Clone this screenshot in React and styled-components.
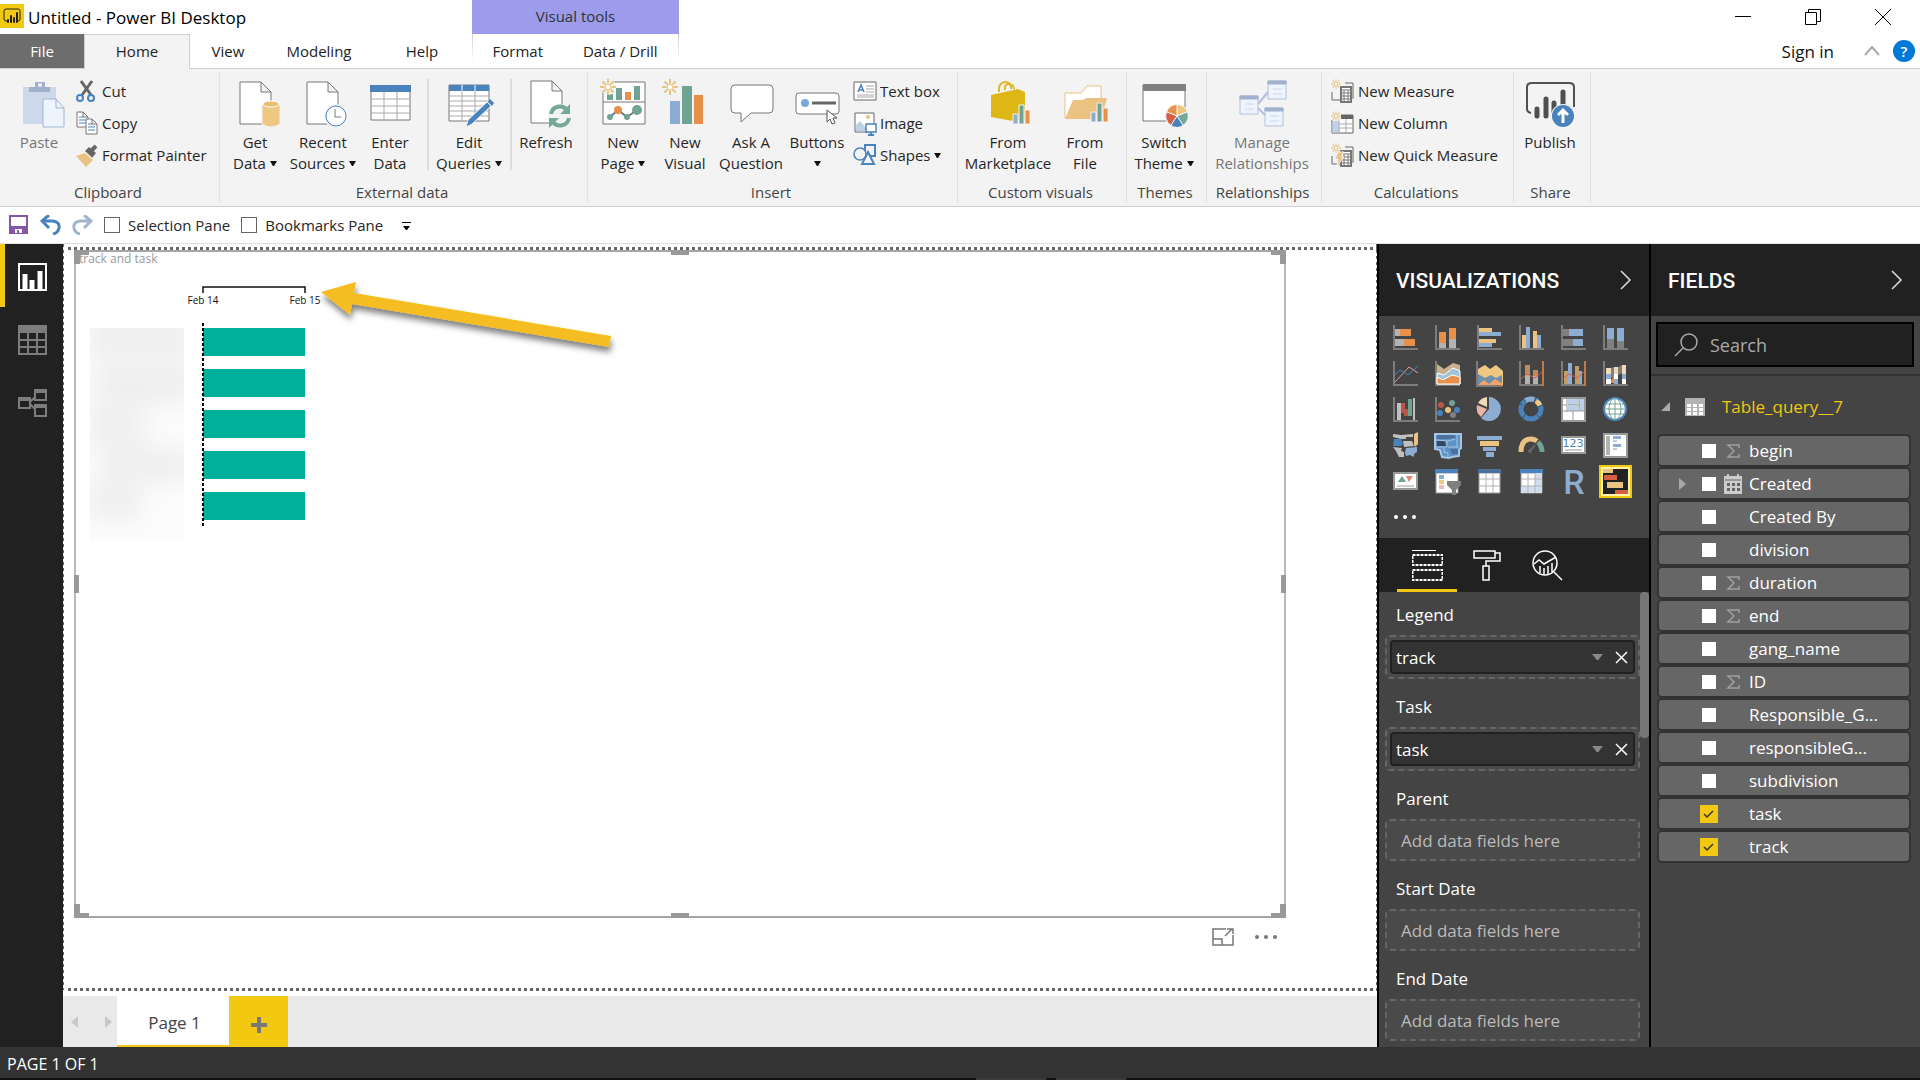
import React from 'react';
import styled, { createGlobalStyle, css } from 'styled-components';

const BLUE = '#4a82bd';
const LIGHT_BLUE = '#8cadd1';
const GREEN = '#6fa393';
const ORANGE = '#e88f49';
const SAND = '#eac282';
const YELLOW = '#f2c811';

/* ---------- ribbon icons ---------- */

const Big = ({ children }) => (
    <svg width="50" height="50" viewBox="0 0 50 50" fill="none" overflow="visible" aria-hidden="true">{children}</svg>
);

const Small = ({ children }) => (
    <svg width="24" height="24" viewBox="0 0 24 24" fill="none" overflow="visible" aria-hidden="true">{children}</svg>
);

const Sheet = ({ x = 10, y = 2, w = 31, h = 42, fold = 10 }) => (
    <path
        d={`M${x} ${y}h${w - fold}l${fold} ${fold}v${h - fold}h${-w}zM${x + w - fold} ${y}v${fold}h${fold}`}
        fill="#fff" stroke="#777"
    />
);

const Burst = ({ x, y, r = 8, width = 2 }) => (
    <g stroke={SAND} strokeWidth={width}>
        {[0, 45, 90, 135, 180, 225, 270, 315].map((a) => (
            <path key={a} d={`M${x + r * 0.45} ${y}H${x + r}`} transform={`rotate(${a} ${x} ${y})`} />
        ))}
        <circle cx={x} cy={y} r={r * 0.35} strokeWidth="1" fill="#fff" />
    </g>
);

const PasteIcon = () => (
    <Big>
        <path d="M9 7h33v37H9z" fill="#cdd8ea" />
        <path d="M15 7h21v5H15z" fill="#a0b0cd" />
        <path d="M21 8V2h10v6z" fill="#a0b0cd" />
        <circle cx="26" cy="5" r="2" fill="#f3f3f3" />
        <path d="M29 19h13l8 9v19H29zM42 19v9h8" fill="#edf4fe" stroke="#a0b5d6" />
    </Big>
);

const GetDataIcon = () => (
    <Big>
        <Sheet />
        <path d="M32 24v20q9 6 18 0V24z" fill="#eec880" stroke="#f3f3f3" />
        <ellipse cx="41" cy="24" rx="8" ry="3" fill="#e9bd6e" stroke="#fff" />
    </Big>
);

const RecentIcon = () => (
    <Big>
        <Sheet x={9} />
        <circle cx="38" cy="36" r="12" fill="#f3f3f3" />
        <circle cx="38" cy="36" r="10" fill="#fff" stroke={BLUE} />
        <path d="M37 29v8h6" stroke="#777" />
    </Big>
);

const EnterDataIcon = () => (
    <Big>
        <path d="M6 6h39v34H6z" fill="#fff" stroke="#777" />
        <path d="M6 19h39M6 26h39M6 33h39M19 12v28M32 12v28" stroke="#aaa" />
        <path d="M5 5h41v7H5z" fill={BLUE} />
    </Big>
);

const EditQueriesIcon = () => (
    <Big>
        <path d="M5 5h40v36H5z" fill="#fff" stroke="#777" />
        <path d="M5 16h40M5 21h40M5 26h40M5 31h40M5 36h40M18 5v36M31 5v36" stroke="#aaa" />
        <path d="M5 5h40v6H5z" fill={BLUE} />
        <path d="M18 5v6M31 5v6" stroke="#fff" />
        <path d="M22 47l2-7 19-18 4 4-19 18z" fill={BLUE} stroke="#f3f3f3" />
        <path d="M44 22l2-3 4 4-2 3z" fill={BLUE} />
    </Big>
);

const RefreshIcon = () => (
    <Big>
        <Sheet y={1} />
        <circle cx="39" cy="36" r="12" fill="#f3f3f3" />
        <path d="M30 34a9 9 0 0 1 16-4M48 38a9 9 0 0 1-16 4" stroke="#74a998" strokeWidth="4" />
        <path d="M49 24v10H39zM28 48V38h10z" fill="#74a998" />
    </Big>
);

const NewPageIcon = () => (
    <Big>
        <path d="M5 2h42v42H5z" fill="#fff" stroke="#777" />
        <path d="M5 22h42" stroke="#777" />
        <path d="M9 14h6v6H9zM18 8h6v12h-6zM36 6h6v14h-6z" fill={GREEN} />
        <path d="M27 12h6v8h-6z" fill={ORANGE} />
        <path d="M12 37l8-7 9 7 10-7" stroke="#777" strokeWidth="2" />
        <circle cx="12" cy="37" r="3" fill={GREEN} />
        <circle cx="20" cy="30" r="4" fill={ORANGE} />
        <circle cx="29" cy="37" r="3" fill={GREEN} />
        <circle cx="39" cy="30" r="5" fill={GREEN} />
        <circle cx="10" cy="7" r="8" fill="#f3f3f3" />
        <Burst x={10} y={7} />
    </Big>
);

const NewVisualIcon = () => (
    <Big>
        <path d="M10 21h10v23H10z" fill={LIGHT_BLUE} />
        <path d="M22 6h10v38H22z" fill={GREEN} />
        <path d="M34 15h9v29h-9z" fill={ORANGE} />
        <Burst x={10} y={7} />
    </Big>
);

const AskIcon = () => (
    <Big>
        <path d="M9 5h34q4 0 4 4v20q0 4-4 4H25l-10 9v-9H9q-4 0-4-4V9q0-4 4-4z" fill="#fff" stroke="#777" />
    </Big>
);

const ButtonsIcon = () => (
    <Big>
        <rect x="4" y="13" width="43" height="21" rx="3" fill="#fff" stroke="#777" />
        <circle cx="13" cy="23" r="4" fill="#74a9d8" />
        <path d="M20 23h24" stroke="#666" strokeWidth="3" />
        <path d="M35 30v12l3-3 2 5 3-1-2-5h4z" fill="#fff" stroke="#555" />
    </Big>
);

const MiniBars = ({ x, y }) => (
    <g stroke="#f3f3f3">
        <path d={`M${x} ${y}h5v10h-5z`} fill={LIGHT_BLUE} />
        <path d={`M${x + 6} ${y - 9}h5v19h-5z`} fill={GREEN} />
        <path d={`M${x + 12} ${y - 4}h5v14h-5z`} fill={ORANGE} />
    </g>
);

const MarketIcon = () => (
    <Big>
        <path d="M16 12V8q1-6 7-6 6 1 5 7M22 10q-1-6 4-6 5 1 5 5" stroke="#dfba24" strokeWidth="2" />
        <path d="M8 15l27-6 7 3v27l-12 2-22-4z" fill="#deb714" />
        <MiniBars x={30} y={34} />
    </Big>
);

const FileIcon = () => (
    <Big>
        <path d="M5 38V13h16l6-7h14v32z" fill="#fff" stroke="#eac282" />
        <path d="M5 39l8-19h10l3-2h21l-6 21z" fill="#eac282" />
        <MiniBars x={31} y={32} />
    </Big>
);

const ThemeIcon = () => (
    <Big>
        <path d="M4 5h42v36H4z" fill="#fff" stroke="#777" />
        <path d="M4 4h43v7H4z" fill="#808080" />
        <circle cx="38" cy="36" r="12" fill="#f3f3f3" />
        <path d="M38 36V25a11 11 0 0 1 10 7z" fill="#eec880" />
        <path d="M38 36l10-4a11 11 0 0 1-4 13z" fill="#74a998" />
        <path d="M38 36l6 9a11 11 0 0 1-12 0z" fill={BLUE} />
        <path d="M38 36l-6 9a11 11 0 0 1-4-13z" fill="#d65e43" />
        <path d="M38 36l-10-4a11 11 0 0 1 10-7z" fill={ORANGE} />
        <path d="M38 36V25M38 36l10-4M38 36l6 9M38 36l-6 9M38 36l-10-4" stroke="#fff" />
    </Big>
);

const RelationTable = ({ x, y }) => (
    <g>
        <path d={`M${x} ${y}h18v18h-18z`} fill="#edf4fe" stroke="#b3c0d9" />
        <path d={`M${x} ${y}h18v3h-18z`} fill="#a0b0cd" stroke="#a0b0cd" />
        <path d={`M${x + 5} ${y + 8}h9M${x + 5} ${y + 13}h9`} stroke="#cdd8ea" />
    </g>
);

const RelationsIcon = () => (
    <Big>
        <path d="M21 24l10-12M21 28l8 8" stroke="#b3c0d9" strokeWidth="2" />
        <RelationTable x={31} y={1} />
        <RelationTable x={3} y={16} />
        <RelationTable x={28} y={28} />
    </Big>
);

const PublishIcon = () => (
    <Big>
        <path d="M6 33q-4-1-4-4V7q0-4 5-4h37q5 0 5 4v20" stroke="#505050" strokeWidth="2" />
        <path d="M12 29v7M21 19v17M29 23v9M38 12v14" stroke="#505050" strokeWidth="5" strokeLinecap="round" />
        <circle cx="38" cy="36" r="12" fill="#f3f3f3" />
        <circle cx="38" cy="36" r="11" fill={BLUE} />
        <path d="M38 43V30M33 35l5-5 5 5" stroke="#fff" strokeWidth="3" />
    </Big>
);

const CutIcon = () => (
    <Small>
        <path d="M6 2l10 14M17 2L7 16" stroke="#666" strokeWidth="3" />
        <circle cx="5" cy="19" r="3" fill="#f3f3f3" stroke={BLUE} strokeWidth="2" />
        <circle cx="16" cy="19" r="3" fill="#f3f3f3" stroke={BLUE} strokeWidth="2" />
    </Small>
);

const CopyIcon = () => (
    <Small>
        <Sheet x={2} y={1} w={11} h={15} fold={5} />
        <path d="M4 6h4M4 9h7M4 12h7" stroke={BLUE} />
        <Sheet x={11} y={8} w={11} h={15} fold={5} />
        <path d="M13 13h4M13 16h7M13 19h7" stroke={BLUE} />
    </Small>
);

const PainterIcon = () => (
    <Small>
        <path d="M1 13l9-3 8 7-7 7z" fill={SAND} />
        <path d="M10 8l4-4 7 6-4 5z" fill="#666" />
        <path d="M16 8l5-5" stroke="#666" strokeWidth="4" />
        <path d="M10 9l8 7" stroke="#f3f3f3" />
    </Small>
);

const TextBoxIcon = () => (
    <Small>
        <path d="M1 3h22v18H1z" fill="#fff" stroke="#666" />
        <path d="M13 7h8M13 10h8M13 13h8M4 16h17M4 18h17" stroke="#aaa" />
        <path d="M5 13l3-7 3 7M6 11h4" stroke={BLUE} strokeWidth="1.500" />
    </Small>
);

const ImageIcon = () => (
    <Small>
        <path d="M2 2h19v19H2z" fill="#fff" stroke="#666" />
        <circle cx="15" cy="6" r="2" fill={SAND} />
        <path d="M3 20v-6l4-4 6 7v3z" fill="#bed0e6" />
        <path d="M13 13h10v8H13z" fill="#fff" stroke={BLUE} strokeWidth="1.500" />
        <path d="M18 21v3M15 24h6" stroke={BLUE} strokeWidth="2" />
    </Small>
);

const ShapesIcon = () => (
    <Small>
        <path d="M12 2h10v11H12z" fill="#f3f3f3" stroke={BLUE} strokeWidth="2" />
        <circle cx="7" cy="11" r="6" fill="#f3f3f3" stroke={BLUE} strokeWidth="1.500" />
        <path d="M15 9l6 12H9z" fill="#f3f3f3" stroke={BLUE} strokeWidth="2" />
    </Small>
);

const Calculator = () => (
    <g>
        <path d="M1 13v8h8M22 4v16M14 4h8" stroke="#666" />
        <path d="M10 8h10v15H10z" fill="#fff" stroke="#777" strokeWidth="2" />
        <path d="M10 11h10M10 14h10M10 17h10M10 20h10M13 11v12M17 11v12" stroke="#777" />
    </g>
);

const MeasureIcon = () => (
    <Small>
        <Calculator />
        <Burst x={5} y={5} r={5} width={1} />
    </Small>
);

const ColumnIcon = () => (
    <Small>
        <path d="M1 4h21v18H1z" fill="#fff" stroke="#666" />
        <path d="M1 10h7v12H1z" fill="#c0d3ea" />
        <path d="M8 4h14v4H8z" fill="#666" />
        <path d="M1 10v12h21M8 8v14M15 8v14M8 13h14M8 17h14" stroke="#aaa" />
        <path d="M0 0h10v9H0z" fill="#f3f3f3" />
        <Burst x={5} y={5} r={5} width={1} />
    </Small>
);

const QuickIcon = () => (
    <Small>
        <Calculator />
        <path d="M7 9h6l-3 5h3l-7 9 1-7H4z" fill={SAND} stroke="#f3f3f3" />
        <Burst x={5} y={5} r={5} width={1} />
    </Small>
);

/* ---------- visualization icons ---------- */

const axes = <path d="M1 0v24h24" stroke="#7c7c7c" strokeWidth="2" />;

const visuals = [
    ['Stacked bar chart', <>{axes}<path d="M2 4h5v7H2zM2 14h9v7H2z" fill="#b3b3b3" /><path d="M7 4h11v7H7zM11 14h11v7H11z" fill={ORANGE} /></>],
    ['Stacked column chart', <>{axes}<path d="M4 18h7v5H4zM14 14h7v9h-7z" fill="#b3b3b3" /><path d="M4 7h7v11H4zM14 3h7v11h-7z" fill={ORANGE} /></>],
    ['Clustered bar chart', <>{axes}<path d="M2 3h13v4H2zM2 14h17v4H2z" fill={SAND} /><path d="M2 7h22v4H2zM2 18h13v4H2z" fill={LIGHT_BLUE} /></>],
    ['Clustered column chart', <>{axes}<path d="M3 10h4v13H3zM14 6h4v17h-4z" fill={SAND} /><path d="M7 2h4v21H7zM18 10h4v13h-4z" fill={LIGHT_BLUE} /></>],
    ['100% stacked bar chart', <>{axes}<path d="M2 4h6v7H2zM2 14h10v7H2z" fill="#808080" /><path d="M8 4h14v7H8zM12 14h10v7H12z" fill={LIGHT_BLUE} /></>],
    ['100% stacked column chart', <>{axes}<path d="M4 14h7v9H4zM14 16h7v7h-7z" fill="#808080" /><path d="M4 3h7v11H4zM14 3h7v13h-7z" fill={LIGHT_BLUE} /></>],

    ['Line chart', <>{axes}<path d="M2 21L16 6l9 6" stroke="#dba092" /><path d="M2 14l5-5 8 5L25 5" stroke={BLUE} /></>],
    ['Area chart', <>{axes}<path d="M2 3l7 5 9-6 7 2v19H2z" fill="#c8b08c" /><path d="M2 12l7 2 9-7 7 3v13H2z" fill="#9fc3d8" stroke="#fff" /><path d="M2 16l6 3 9-5 8 2v7H2z" fill={ORANGE} stroke="#fff" /></>],
    ['Stacked area chart', <><path d="M1 8l7-4 5 4 6-4 7 6v14H1z" fill="#eec880" /><path d="M1 13l7 4 6-3 5 3 6-3v11H1z" fill="#6f90ad" /><path d="M1 24l6-5 5 4 6-5 8 5v2H1z" fill="#f5a467" /><path d="M0 0v25h25" stroke="#7c7c7c" strokeWidth="2" /></>],
    ['Line and stacked column chart', <>{axes}<path d="M6 4h5v10H6zM14 9h5v6h-5z" fill="#bd8a63" /><path d="M6 14h5v9H6zM14 15h5v8h-5z" fill="#b3b3b3" /><path d="M24 0v25" stroke="#c17a45" strokeWidth="2" /><path d="M2 18l6-5 8 4 7-6" stroke="#d65e43" /></>],
    ['Line and clustered column chart', <>{axes}<path d="M3 10h4v13H3zM14 5h4v18h-4z" fill="#c29e66" /><path d="M7 2h4v21H7zM18 10h3v13h-3z" fill={LIGHT_BLUE} /><path d="M24 0v25" stroke="#c17a45" strokeWidth="2" /><path d="M2 18l6-5 8 4 7-6" stroke="#d65e43" /></>],
    ['Ribbon chart', <>{axes}<path d="M7 7l5-1v8l-5 4zM15 6l5-2v8l-5 2z" fill="#808080" /><path d="M7 22l4-8 4 8z" fill={ORANGE} /><path d="M3 7h5v6H3zM11 6h4v8h-4zM19 4h4v9h-4z" fill="#f0dab5" /><path d="M3 13h5v5H3zM11 18h4v5h-4zM19 13h4v5h-4z" fill={LIGHT_BLUE} /><path d="M3 18h5v5H3zM11 13h4v5h-4zM19 18h4v5h-4z" fill="#fff" /></>],

    ['Waterfall chart', <>{axes}<path d="M4 6h4v17H4zM20 1h2v22h-2z" fill="#c0c0c0" /><path d="M8 6h4v6h3v7h-4v-3H8z" fill="#bb5746" /><path d="M15 2h4v17h-4z" fill={GREEN} /></>],
    ['Scatter chart', <>{axes}<circle cx="6" cy="8" r="3" fill="#bb5746" /><circle cx="17" cy="6" r="3" fill={GREEN} /><circle cx="5" cy="16" r="3" fill={BLUE} /><circle cx="13" cy="13" r="3" fill={SAND} /><circle cx="22" cy="13" r="3" fill={BLUE} /><circle cx="18" cy="18" r="3" fill="#808080" /></>],
    ['Pie chart', <><path d="M12 0a12 12 0 1 1-8 21l8-9z" fill={LIGHT_BLUE} /><path d="M10 0v10L1 6a12 12 0 0 1 9-6z" fill="#f0dab5" /><path d="M0 8l10 4-6 8a12 12 0 0 1-4-12z" fill="#ecb3a6" /></>],
    ['Donut chart', <g strokeWidth="5"><circle cx="12" cy="12" r="10" stroke={BLUE} /><path d="M6 4a10 10 0 0 1 10-1" stroke={LIGHT_BLUE} /><path d="M17 4a10 10 0 0 1 4 5" stroke="#eec880" /><path d="M7 5L4 1M15 5l2-5M19 10l6-3M18 18l5 5M6 18l-4 5M3 8L0 6" stroke="#444" strokeWidth="1" /></g>],
    ['Treemap', <><path d="M1 1h23v23H1z" fill="#fff" stroke="#999" strokeWidth="2" /><path d="M7 2h10v6H7zM18 2h5v12h-5zM7 9h10v5H7z" fill="#bccfe8" /><path d="M6 2v13M2 8h4M2 14h21M12 14v9M18 2v12M7 8h11" stroke="#999" /></>],
    ['Map', <><circle cx="12" cy="12" r="11" fill="#fff" stroke={BLUE} strokeWidth="2" /><path d="M2 7h20M2 17h20M1 12h22M12 1v22" stroke={GREEN} /><ellipse cx="12" cy="12" rx="6" ry="11" stroke={GREEN} /></>],

    ['Filled map', <><path d="M0 1l8 1 12-1v3h-7v2H8L0 4z" fill="#c0c0c0" /><path d="M21 1l4-2v12l-3 3-1-3z" fill={SAND} /><path d="M1 6h7l2 5-2 2H0z" fill={BLUE} /><path d="M10 8h9l2 5-10 1z" fill="#c0c0c0" /><path d="M0 14l9 1-1 3 3 1v5H6l-3-6z" fill="#c0c0c0" /><path d="M13 15l11-1v5l-3 2v3l-4-2-4 1-1-3z" fill={LIGHT_BLUE} /></>],
    ['Shape map', <><path d="M0 1h26v14l-2 2v6l-7 1-3 1-7-1-2-7-5-1z" fill="#5f93c8" stroke="#a6c6e6" strokeWidth="2" /><path d="M2 2h17l2 3-8 1H2z" fill="#4a709b" /><path d="M2 8h8l1 5H2z" fill="#34475c" /><path d="M15 16h8v5h-6z" fill="#4a709b" /><path d="M1 7l12 1 7-2M12 8v6H1M13 14h11M9 15v4l4 1v4M22 1v13" stroke="#a6c6e6" /></>],
    ['Funnel', <><path d="M0 3h25v4H0zM6 14h13v4H6zM9 19h8v5H9z" fill={LIGHT_BLUE} /><path d="M3 8h19v5H3z" fill={SAND} /></>],
    ['Gauge', <><path d="M2 19Q2 6 12 6q3 0 6 2" stroke={SAND} strokeWidth="5" /><path d="M19 9q4 4 4 10" stroke={GREEN} strokeWidth="5" /><path d="M16 12l-5 6" stroke="#666" strokeWidth="2" /><circle cx="11" cy="18" r="2" fill="#666" /></>],
    ['Card', <><path d="M1 4h23v16H1z" fill="#fff" stroke="#999" strokeWidth="2" /><text x="12" y="14" fontSize="11" fontFamily="DejaVu Sans, sans-serif" fill={BLUE} textAnchor="middle">123</text><path d="M4 17h17" stroke="#999" /></>],
    ['Multi-row card', <><path d="M1 1h23v23H1z" fill="#fff" stroke="#999" strokeWidth="2" /><path d="M3 3h4v19H3z" fill="#b3b3b3" /><path d="M10 3h8v3h-8zM10 11h8v3h-8z" fill={LIGHT_BLUE} /><path d="M10 8h4M10 16h4" stroke="#ccc" strokeWidth="2" /></>],

    ['KPI', <><path d="M1 4h23v16H1z" fill="#fff" stroke="#999" strokeWidth="2" /><path d="M5 13l4-6 4 6z" fill={GREEN} /><path d="M13 7h7l-4 6z" fill="#e08774" /><path d="M4 17h17" stroke="#999" /></>],
    ['Slicer', <><path d="M1 4h22v20H1z" fill="#fff" stroke="#999" /><path d="M0 0h23v4H0z" fill={BLUE} /><path d="M4 6h5v4H4z" fill={LIGHT_BLUE} /><path d="M4 11h5v4H4z" fill="#eec880" /><path d="M4 16h5v4H4z" fill="#f0bdb4" /><path d="M12 12h14v4l-5 5v5h-4v-5l-5-5z" fill="#808080" /></>],
    ['Table', <><path d="M2 4h21v20H2z" fill="#fff" stroke="#999" /><path d="M1 0h23v4H1z" fill="#4a709b" /><path d="M2 10h21M2 17h21M9 4v20M16 4v20" stroke="#b3b3b3" /></>],
    ['Matrix', <><path d="M2 4h21v20H2z" fill="#fff" stroke="#999" /><path d="M16 4h7v20H2v-7h14z" fill="#d0deee" /><path d="M1 0h23v4H1z" fill={BLUE} /><path d="M2 10h21M2 17h21M9 4v20M16 4v20" stroke="#b3b3b3" /></>],
    ['R script visual', <text x="13" y="25" fontSize="34" fontWeight="500" fontFamily="Roboto, sans-serif" fill={LIGHT_BLUE} textAnchor="middle">R</text>],
    ['Gantt', <><path d="M0-1h25v26H0z" fill="#212121" /><path d="M0-1h10v5H0zM4 13h16v6H4z" fill={SAND} /><path d="M1 6h13v5H1zM12 21h13v4H12z" fill="#d65e43" /></>],
];

/* ---------- data ---------- */

const fields = [
    { name: 'begin', sum: true },
    { name: 'Created', date: true },
    { name: 'Created By' },
    { name: 'division' },
    { name: 'duration', sum: true },
    { name: 'end', sum: true },
    { name: 'gang_name' },
    { name: 'ID', sum: true },
    { name: 'Responsible_G...' },
    { name: 'responsibleG...' },
    { name: 'subdivision' },
    { name: 'task', checked: true },
    { name: 'track', checked: true },
];

const wells = [
    { label: 'Legend', value: 'track' },
    { label: 'Task', value: 'task' },
    { label: 'Parent' },
    { label: 'Start Date' },
    { label: 'End Date' },
];

/* ---------- parts ---------- */

const Caret = ({ color = '#111', w = 7, h = 5 }) => (
    <svg width={w} height={h} viewBox="0 0 7 5" preserveAspectRatio="none" aria-hidden="true"><path d="M0 0h7L4 5H3z" fill={color} /></svg>
);

const Chevron = () => (
    <svg width="12" height="20" viewBox="0 0 12 20" fill="none" aria-hidden="true"><path d="M1 1l9 9-9 9" stroke="#ddd" strokeWidth="1.500" /></svg>
);

const Tool = ({ width, icon, lines, drop, disabled }) => (
    <ToolButton $width={width} disabled={disabled}>
        {icon}
        <ToolLabel>
            <span>{lines[0]}</span>
            {(lines[1] || drop) && <span>{lines[1]}{drop && <Caret />}</span>}
        </ToolLabel>
    </ToolButton>
);

const Ribbon = () => (
    <RibbonBar>
        <Group $width={220}>
            <GroupBody $pad={8}>
                <Tool width={62} icon={<PasteIcon />} lines={['Paste']} disabled />
                <Stack>
                    <SmallTool><CutIcon />Cut</SmallTool>
                    <SmallTool><CopyIcon />Copy</SmallTool>
                    <SmallTool><PainterIcon />Format Painter</SmallTool>
                </Stack>
            </GroupBody>
            <GroupName>Clipboard</GroupName>
        </Group>
        <Group $width={368}>
            <GroupBody $pad={1}>
                <Tool width={68} icon={<GetDataIcon />} lines={['Get', 'Data']} drop />
                <Tool width={68} icon={<RecentIcon />} lines={['Recent', 'Sources']} drop />
                <Tool width={66} icon={<EnterDataIcon />} lines={['Enter', 'Data']} />
                <Divider />
                <Tool width={74} icon={<EditQueriesIcon />} lines={['Edit', 'Queries']} drop />
                <Divider />
                <Tool width={62} icon={<RefreshIcon />} lines={['Refresh']} />
            </GroupBody>
            <GroupName>External data</GroupName>
        </Group>
        <Group $width={370}>
            <GroupBody $pad={4}>
                <Tool width={62} icon={<NewPageIcon />} lines={['New', 'Page']} drop />
                <Tool width={62} icon={<NewVisualIcon />} lines={['New', 'Visual']} />
                <Tool width={70} icon={<AskIcon />} lines={['Ask A', 'Question']} />
                <Tool width={62} icon={<ButtonsIcon />} lines={['Buttons', '']} drop />
                <Stack>
                    <SmallTool><TextBoxIcon />Text box</SmallTool>
                    <SmallTool><ImageIcon />Image</SmallTool>
                    <SmallTool><ShapesIcon />Shapes <Caret /></SmallTool>
                </Stack>
            </GroupBody>
            <GroupName>Insert</GroupName>
        </Group>
        <Group $width={169}>
            <GroupBody $pad={4}>
                <Tool width={92} icon={<MarketIcon />} lines={['From', 'Marketplace']} />
                <Tool width={62} icon={<FileIcon />} lines={['From', 'File']} />
            </GroupBody>
            <GroupName>Custom visuals</GroupName>
        </Group>
        <Group $width={80}>
            <GroupBody $pad={1}>
                <Tool width={72} icon={<ThemeIcon />} lines={['Switch', 'Theme']} drop />
            </GroupBody>
            <GroupName>Themes</GroupName>
        </Group>
        <Group $width={115}>
            <GroupBody $pad={4}>
                <Tool width={102} icon={<RelationsIcon />} lines={['Manage', 'Relationships']} disabled />
            </GroupBody>
            <GroupName>Relationships</GroupName>
        </Group>
        <Group $width={192}>
            <GroupBody $pad={4}>
                <Stack>
                    <SmallTool><MeasureIcon />New Measure</SmallTool>
                    <SmallTool><ColumnIcon />New Column</SmallTool>
                    <SmallTool><QuickIcon />New Quick Measure</SmallTool>
                </Stack>
            </GroupBody>
            <GroupName>Calculations</GroupName>
        </Group>
        <Group $width={77}>
            <GroupBody $pad={1}>
                <Tool width={70} icon={<PublishIcon />} lines={['Publish']} />
            </GroupBody>
            <GroupName>Share</GroupName>
        </Group>
    </RibbonBar>
);

const GanttChart = () => (
    <ChartSvg viewBox="0 0 560 300" width="560" height="300" role="img" aria-label="Gantt chart">
        <defs>
            <filter id="soft" x="-50%" y="-50%" width="200%" height="200%"><feGaussianBlur stdDeviation="13" /></filter>
            <filter id="shade" x="-10%" y="-20%" width="120%" height="160%">
                <feDropShadow dx="1" dy="5" stdDeviation="3" floodColor="#000" floodOpacity="0.5" />
            </filter>
            <clipPath id="names"><path d="M15 76h94v213H15z" /></clipPath>
        </defs>
        <g clipPath="url(#names)">
            <path d="M15 76h94v213H15z" fill="#fcfcfc" />
            <g filter="url(#soft)" fill="#eeeeee">
                <path d="M12 66h108v38H12zM20 112h100v40H20zM12 156h58v36H12zM25 196h95v34H25zM12 234h54v34H12z" />
            </g>
        </g>
        <path d="M128 41v-6h102v6" fill="none" stroke="#111" strokeWidth="1.500" />
        <AxisText x="128" y="52">Feb 14</AxisText>
        <AxisText x="230" y="52">Feb 15</AxisText>
        {[0, 1, 2, 3, 4].map((i) => (
            <rect key={i} x="128" y={76 + i * 41} width="102" height="28" fill="#01b09a" />
        ))}
        <path d="M128 71v205" stroke="#000" strokeWidth="2" strokeDasharray="3 2" />
        <path d="M246 40l35-10-2 11 257 43-2 11-257-43-2 11z" fill="#f5bd22" filter="url(#shade)" />
    </ChartSvg>
);

const App = () => (
    <Page>
        <GlobalStyle />
        <TitleBar>
            <Logo>
                <svg width="18" height="16" viewBox="0 0 18 16" fill="none" aria-hidden="true">
                    <path d="M4 13H3q-2 0-2-2V3q0-2 2-2h12q2 0 2 2v8q0 2-2 2" stroke="#222" />
                    <path d="M5 12v2M8 8v6M11 10v4M14 5v9" stroke="#222" strokeWidth="2" strokeLinecap="round" />
                </svg>
            </Logo>
            <AppTitle>Untitled - Power BI Desktop</AppTitle>
            <ToolsTitle>Visual tools</ToolsTitle>
            <WindowButtons>
                <button aria-label="Minimize"><svg width="16" height="16" stroke="#000" fill="none"><path d="M0 7.500h16" /></svg></button>
                <button aria-label="Restore"><svg width="16" height="16" stroke="#000" fill="none"><path d="M.5 3.500h11v12H.5zM3.500 3.500v-3h12v12h-4" /></svg></button>
                <button aria-label="Close"><svg width="16" height="16" stroke="#000" fill="none"><path d="M0 0l16 16M16 0L0 16" /></svg></button>
            </WindowButtons>
        </TitleBar>
        <Tabs>
            <Tab $width={84} $kind="file">File</Tab>
            <Tab $width={106} $kind="active">Home</Tab>
            <Tab $width={76}>View</Tab>
            <Tab $width={106}>Modeling</Tab>
            <Tab $width={100}>Help</Tab>
            <ToolTabs>
                <Tab $width={90}>Format</Tab>
                <Tab $width={116}>Data / Drill</Tab>
            </ToolTabs>
            <Account>
                <SignIn href="#signin">Sign in</SignIn>
                <svg width="16" height="10" viewBox="0 0 16 10" fill="none" aria-hidden="true"><path d="M1 9l7-8 7 8" stroke="#aaa" strokeWidth="2" /></svg>
                <Help aria-label="Help">?</Help>
            </Account>
        </Tabs>
        <Ribbon />
        <QuickBar>
            <IconButton aria-label="Save">
                <svg width="20" height="20" viewBox="0 0 20 20" fill="none"><path d="M1 1h17v17H1z" fill="#fff" stroke="#8557a8" strokeWidth="2" /><path d="M2 11h15v7H2z" fill="#8557a8" /><path d="M6 14h7v4H6z" fill="#fff" /><path d="M8 15h2v3H8z" fill="#8557a8" /></svg>
            </IconButton>
            <IconButton aria-label="Undo">
                <svg width="21" height="20" viewBox="0 0 21 20" fill="none"><path d="M2 6h11q7 1 6 7-1 5-6 6" stroke={BLUE} strokeWidth="3" /><path d="M9 0L2 6l7 7" stroke={BLUE} strokeWidth="3" /></svg>
            </IconButton>
            <IconButton aria-label="Redo">
                <svg width="21" height="20" viewBox="0 0 21 20" fill="none"><path d="M19 6H8Q1 7 2 13q1 5 6 6M12 0l7 6-7 7" stroke="#a3b2cd" strokeWidth="3" /></svg>
            </IconButton>
            <PaneToggle><input type="checkbox" />Selection Pane</PaneToggle>
            <PaneToggle><input type="checkbox" />Bookmarks Pane</PaneToggle>
            <CustomizeButton aria-label="Customize">
                <svg width="9" height="9" viewBox="0 0 9 9"><path d="M0 0h9v1H0zM1 4h7L5 8H4z" /></svg>
            </CustomizeButton>
        </QuickBar>
        <Workspace>
            <Rail>
                <RailButton $active aria-label="Report">
                    <svg width="29" height="29" viewBox="0 0 29 29" fill="none"><path d="M1 1h27v26H1z" stroke="#fff" strokeWidth="2" /><path d="M7 27V11M14 27V17M22 27V8" stroke="#fff" strokeWidth="5" /></svg>
                </RailButton>
                <RailButton aria-label="Data">
                    <svg width="29" height="30" viewBox="0 0 29 30" fill="none"><path d="M1 1h27v28H1zM1 15h27M1 22h27M10 8v20M19 8v20" stroke="#7c7c7c" strokeWidth="2" /><path d="M1 1h27v7H1z" fill="#7c7c7c" /></svg>
                </RailButton>
                <RailButton aria-label="Model">
                    <svg width="29" height="28" viewBox="0 0 29 28" fill="none"><path d="M1 9h11v10H1zM17 2h11v9H17zM17 17h11v10H17zM12 13l5-5M12 15l5 5" stroke="#7c7c7c" strokeWidth="2" /><path d="M0 8h13v4H0zM16 0h13v4H16zM16 15h13v4H16z" fill="#7c7c7c" /></svg>
                </RailButton>
            </Rail>
            <Center>
                <Canvas>
                    <Visual>
                        <Handle $v="top" $h="left" /><Handle $v="top" $h="right" />
                        <Handle $v="bottom" $h="left" /><Handle $v="bottom" $h="right" />
                        <EdgeHandle $side="top" /><EdgeHandle $side="bottom" />
                        <EdgeHandle $side="left" /><EdgeHandle $side="right" />
                        <VisualTitle>track and task</VisualTitle>
                        <GanttChart />
                    </Visual>
                    <VisualActions>
                        <IconButton aria-label="Focus mode">
                            <svg width="22" height="18" viewBox="0 0 22 18" fill="none" stroke="#777" strokeWidth="1.500"><path d="M14 1H1v16h20V7M1 11h9v6M13 8l7-7M15 1h6v5" /></svg>
                        </IconButton>
                        <IconButton aria-label="More options">
                            <svg width="24" height="4" viewBox="0 0 24 4" fill="#777"><circle cx="3" cy="2" r="2" /><circle cx="12" cy="2" r="2" /><circle cx="21" cy="2" r="2" /></svg>
                        </IconButton>
                    </VisualActions>
                </Canvas>
                <PageBar>
                    <PageArrows>
                        <svg width="7" height="12" viewBox="0 0 7 12"><path d="M7 0v12L0 6z" fill="#c8c8c8" /></svg>
                        <svg width="7" height="12" viewBox="0 0 7 12"><path d="M0 0v12l7-6z" fill="#c8c8c8" /></svg>
                    </PageArrows>
                    <PageTab>Page 1</PageTab>
                    <AddPage aria-label="Add page">
                        <svg width="16" height="16" viewBox="0 0 16 16"><path d="M6 0h4v6h6v4h-6v6H6v-6H0V6h6z" fill="#777" /></svg>
                    </AddPage>
                </PageBar>
            </Center>
            <Panel $width={272}>
                <PanelHead><h2>VISUALIZATIONS</h2><Chevron /></PanelHead>
                <VisualGrid>
                    {visuals.map(([name, art], i) => (
                        <VisualPick key={name} aria-label={name} $selected={i === visuals.length - 1}>
                            <svg width="25" height="25" viewBox="0 0 25 25" fill="none" overflow="visible">{art}</svg>
                        </VisualPick>
                    ))}
                    <VisualPick aria-label="More visuals">
                        <svg width="25" height="4" viewBox="0 0 25 4" fill="#fff"><circle cx="3" cy="2" r="2" /><circle cx="12" cy="2" r="2" /><circle cx="21" cy="2" r="2" /></svg>
                    </VisualPick>
                </VisualGrid>
                <PaneTabs>
                    <PaneTab $active aria-label="Fields">
                        <svg width="31" height="31" viewBox="0 0 31 31" fill="none" stroke="#fff"><path d="M0 .5h24" /><path d="M.5 5h30v10H.5zM.5 20h30v10H.5z" strokeWidth="2" strokeDasharray="3 1" /></svg>
                    </PaneTab>
                    <PaneTab aria-label="Format">
                        <svg width="28" height="31" viewBox="0 0 28 31" fill="none" stroke="#fff" strokeWidth="1.500"><path d="M1 1h21v7H1zM22 3h5v8H13v5M10 16h6v14h-6z" /></svg>
                    </PaneTab>
                    <PaneTab aria-label="Analytics">
                        <svg width="31" height="31" viewBox="0 0 31 31" fill="none" stroke="#fff" strokeWidth="1.500"><circle cx="13" cy="13" r="12" /><path d="M2 14l5-4 5 4 12-7M8 16v7M12 18v6M16 16v8M20 13v9M22 22l8 8" /></svg>
                    </PaneTab>
                </PaneTabs>
                <Wells>
                    {wells.map(({ label, value }) => (
                        <Well key={label}>
                            <h3>{label}</h3>
                            <Drop $filled={!!value}>
                                {value ? (
                                    <Chip>
                                        <span>{value}</span>
                                        <Caret color="#888" w={11} h={6} />
                                        <IconButton aria-label={`Remove ${value}`}>
                                            <svg width="13" height="13" viewBox="0 0 13 13" fill="none"><path d="M1 1l11 11M12 1L1 12" stroke="#fff" strokeWidth="1.500" /></svg>
                                        </IconButton>
                                    </Chip>
                                ) : 'Add data fields here'}
                            </Drop>
                        </Well>
                    ))}
                    <ScrollThumb />
                </Wells>
            </Panel>
            <Panel $width={271}>
                <PanelHead><h2>FIELDS</h2><Chevron /></PanelHead>
                <SearchArea>
                    <SearchBox>
                        <svg width="24" height="24" viewBox="0 0 24 24" fill="none" stroke="#aaa" strokeWidth="1.500"><circle cx="15" cy="9" r="8" /><path d="M9 15l-8 8" /></svg>
                        <input type="search" aria-label="Search" placeholder="Search" />
                    </SearchBox>
                </SearchArea>
                <TableRow>
                    <svg width="9" height="9" viewBox="0 0 9 9"><path d="M9 0v9H0z" fill="#aaa" /></svg>
                    <svg width="20" height="18" viewBox="0 0 20 18"><path d="M0 0h20v18H0z" fill="#b3b3b3" /><path d="M2 6h4v3H2zM8 6h4v3H8zM14 6h4v3h-4zM2 10h4v3H2zM8 10h4v3H8zM14 10h4v3h-4zM2 14h4v3H2zM8 14h4v3H8zM14 14h4v3h-4z" fill="#fff" /></svg>
                    <span>Table_query__7</span>
                </TableRow>
                <FieldList>
                    {fields.map(({ name, sum, date, checked }) => (
                        <Field key={name}>
                            <Slot>{date && <svg width="7" height="12" viewBox="0 0 7 12"><path d="M0 0v12l7-6z" fill="#aaa" /></svg>}</Slot>
                            <Tick><input type="checkbox" defaultChecked={checked} /></Tick>
                            <TypeSlot>
                                {sum && <svg width="14" height="14" viewBox="0 0 14 14" fill="none"><path d="M13 4V1H2l6 6-6 6h11v-3" stroke="#a0a0a0" strokeWidth="1.500" /></svg>}
                                {date && <svg width="18" height="20" viewBox="0 0 18 20"><path d="M0 2h18v18H0z" fill="#ccc" /><path d="M4 0v4M14 0v4" stroke="#ccc" strokeWidth="2" /><path d="M1 6h16" stroke="#666" /><path d="M3 9h3v3H3zM8 9h3v3H8zM13 9h3v3h-3zM3 14h3v3H3zM8 14h3v3H8zM13 14h3v3h-3z" fill="#666" /></svg>}
                            </TypeSlot>
                            {name}
                        </Field>
                    ))}
                </FieldList>
            </Panel>
        </Workspace>
        <Status>PAGE 1 OF 1</Status>
        <Taskbar><i /><i /></Taskbar>
    </Page>
);

/* ---------- styles ---------- */

const GlobalStyle = createGlobalStyle`
    * {
        box-sizing: border-box;
    }
    body {
        margin: 0;
        font-family: "Open Sans", "Noto Sans", sans-serif;
        font-size: 15px;
        color: #262626;
        background: #fff;
    }
    button {
        margin: 0;
        padding: 0;
        border: 0;
        background: none;
        font: inherit;
        color: inherit;
    }
    h2, h3 {
        margin: 0;
        font-weight: 400;
    }
    svg {
        display: block;
        flex: none;
    }
`

const Page = styled.div`
    display: flex;
    flex-direction: column;
    min-height: 100vh;
`

const TitleBar = styled.header`
    display: flex;
    height: 34px;
`

const Logo = styled.div`
    width: 24px;
    height: 24px;
    margin-top: 4px;
    display: flex;
    align-items: center;
    justify-content: center;
    background: ${YELLOW};
`

const AppTitle = styled.div`
    width: 448px;
    padding: 2px 0 0 4px;
    line-height: 32px;
    font-size: 17px;
    color: #000;
`

const ToolsTitle = styled.div`
    width: 207px;
    line-height: 33px;
    text-align: center;
    color: #333;
    background: #9c9bec;
`

const WindowButtons = styled.div`
    display: flex;
    margin-left: auto;
    gap: 54px;
    padding: 9px 29px 0 0;
    align-items: flex-start;
`

const Tabs = styled.nav`
    display: flex;
    height: 35px;
    border-bottom: 1px solid #d0d0d0;
`

const Tab = styled.button`
    width: ${({ $width }) => $width}px;
    height: 34px;
    text-align: center;
    color: ${({ $kind }) => ($kind === 'file' ? '#fff' : '#222')};
    ${({ $kind }) => $kind === 'file' && css`background: #6d6d6d;`}
    ${({ $kind }) => $kind === 'active' && css`
        height: 35px;
        padding-bottom: 2px;
        background: #f3f3f3;
        border: 1px solid #d0d0d0;
        border-bottom: 0;
    `}
`

const ToolTabs = styled.div`
    display: flex;
    width: 207px;
    border: 1px solid;
    border-width: 0 1px;
    border-image: linear-gradient(#ccc, #fff 80%) 1;
`

const Account = styled.div`
    display: flex;
    align-items: center;
    margin-left: auto;
    padding-right: 5px;
    gap: 13px;
`

const SignIn = styled.a`
    font-size: 17px;
    margin-right: 17px;
    color: #111;
    text-decoration: none;
`

const Help = styled.button`
    width: 22px;
    height: 22px;
    border-radius: 50%;
    background: #0078d7;
    color: #fff;
    font-weight: 600;
    line-height: 22px;
`

const RibbonBar = styled.div`
    display: flex;
    height: 138px;
    background: #f3f3f3;
    border-bottom: 1px solid #d0d0d0;
`

const Group = styled.section`
    display: flex;
    flex-direction: column;
    flex: none;
    width: ${({ $width }) => $width}px;
    margin: 3px 0;
    border-right: 1px solid #e1e1e1;
`

const GroupBody = styled.div`
    display: flex;
    flex: 1;
    padding: 7px 0 0 ${({ $pad }) => $pad}px;
`

const GroupName = styled.div`
    padding: 0 3px 1px 0;
    text-align: center;
    line-height: 20px;
    color: #444;
`

const ToolButton = styled.button`
    display: flex;
    flex-direction: column;
    align-items: center;
    width: ${({ $width }) => $width}px;
    padding-top: 1px;
    gap: 2px;
    color: ${({ disabled }) => (disabled ? '#777' : '#262626')};
`

const ToolLabel = styled.span`
    display: flex;
    flex-direction: column;
    align-items: center;
    line-height: 21px;
    white-space: nowrap;

    span {
        display: flex;
        align-items: center;
        gap: 4px;
        min-height: 21px;
    }
`

const Divider = styled.div`
    width: 2px;
    height: 91px;
    margin: 0 3px 0 4px;
    background: #dcdcdc;
`

const Stack = styled.div`
    display: flex;
    flex-direction: column;
    align-items: flex-start;
    gap: 8px;
    padding-left: 5px;
`

const SmallTool = styled.button`
    display: flex;
    align-items: center;
    gap: 3px;
    height: 24px;
    white-space: nowrap;
`

const QuickBar = styled.div`
    display: flex;
    align-items: center;
    height: 37px;
    gap: 11px;
    padding-left: 9px;
    border-bottom: 1px solid #e1e1e1;
`

const IconButton = styled.button`
    display: flex;
    align-items: center;
    justify-content: center;
`

const CustomizeButton = styled(IconButton)`
    margin: 2px 0 0 8px;
`

const PaneToggle = styled.label`
    display: flex;
    align-items: center;
    gap: 8px;

    input {
        appearance: none;
        width: 16px;
        height: 16px;
        margin: 0;
        border: 1px solid #666;
        background: #fff;
    }
`

const Workspace = styled.main`
    display: flex;
    flex: 1;
    background: #444;
`

const Rail = styled.nav`
    width: 63px;
    flex: none;
    background: #212121;
`

const RailButton = styled.button`
    display: flex;
    align-items: center;
    width: 100%;
    height: 63px;
    padding: 3px 0 0 13px;
    border-left: 5px solid ${({ $active }) => ($active ? YELLOW : 'transparent')};
`

const Center = styled.div`
    display: flex;
    flex-direction: column;
    flex: 1;
    min-width: 0;
`

const dots = 'repeating-linear-gradient(90deg, #666 0 3px, transparent 3px 6px)';
const dashes = 'repeating-linear-gradient(#666 0 3px, transparent 3px 6px)';

const Canvas = styled.div`
    display: flex;
    flex-direction: column;
    flex: 1;
    padding: 6px 91px 5px 11px;
    background:
        ${dots} 5px 3px / 100% 3px no-repeat,
        ${dots} 5px calc(100% - 5px) / 100% 3px no-repeat,
        ${dashes} 0 0 / 1px calc(100% - 6px) no-repeat,
        ${dashes} 100% 0 / 1px calc(100% - 6px) no-repeat,
        #fff;
`

const Visual = styled.section`
    position: relative;
    flex: 1;
    padding: 0 2px;
    border: 2px solid #a6a6a6;
    border-left-color: #b8b8b8;
    border-right-color: #b8b8b8;
`

const Handle = styled.i`
    position: absolute;
    ${({ $v }) => $v}: -2px;
    ${({ $h }) => $h}: -2px;
    width: 15px;
    height: 14px;
    border: 0 solid #999;
    border-${({ $v }) => $v}-width: 5px;
    border-${({ $h }) => $h}-width: 6px;
`

const EdgeHandle = styled.i`
    position: absolute;
    background: #999;
    ${({ $side }) => $side}: -2px;
    ${({ $side }) => ($side === 'top' || $side === 'bottom' ? css`
        left: calc(50% - 9px);
        width: 18px;
        height: 5px;
    ` : css`
        top: calc(50% - 9px);
        width: 5px;
        height: 18px;
    `)}
`

const VisualTitle = styled.div`
    position: absolute;
    top: -1px;
    left: 3px;
    font-size: 12px;
    line-height: 16px;
    color: #999;
`

const ChartSvg = styled.svg`
    margin-left: -3px;
`

const AxisText = styled.text`
    font-size: 10px;
    text-anchor: middle;
    fill: #111;
`

const VisualActions = styled.div`
    display: flex;
    align-items: center;
    justify-content: flex-end;
    gap: 20px;
    height: 73px;
    padding: 0 8px 36px 0;
`

const PageBar = styled.div`
    display: flex;
    height: 51px;
    background: #e9e9e9;
`

const PageArrows = styled.div`
    display: flex;
    align-items: center;
    justify-content: space-between;
    width: 54px;
    padding: 0 5px 0 8px;
`

const PageTab = styled.button`
    width: 112px;
    padding: 3px 0 0 3px;
    font-size: 17px;
    font-weight: 500;
    color: #444;
    background: #fff;
    border-bottom: 2px solid ${YELLOW};
`

const AddPage = styled.button`
    display: flex;
    align-items: center;
    justify-content: center;
    width: 59px;
    padding-top: 6px;
    background: ${YELLOW};
`

const Panel = styled.aside`
    display: flex;
    flex-direction: column;
    flex: none;
    width: ${({ $width }) => $width}px;
    border-left: 2px solid #000;
    color: #fff;
    font-size: 17px;
    background: #444;
`

const PanelHead = styled.div`
    display: flex;
    align-items: center;
    justify-content: space-between;
    height: 72px;
    padding: 0 17px;
    background: #212121;

    h2 {
        padding-top: 2px;
        font-family: Roboto, sans-serif;
        font-size: 21px;
        font-weight: 500;
    }
`

const VisualGrid = styled.div`
    display: grid;
    grid-template-columns: repeat(6, 42px);
    grid-auto-rows: 36px;
    height: 222px;
    padding: 3px 0 0 5px;
`

const VisualPick = styled.button`
    display: flex;
    align-items: center;
    justify-content: center;
    justify-self: center;
    align-self: center;
    width: 33px;
    height: 33px;
    ${({ $selected }) => $selected && css`
        border: 2px solid ${YELLOW};
        outline: 2px solid #fff3a8;
        outline-offset: -4px;
    `}
`

const PaneTabs = styled.div`
    display: flex;
    height: 54px;
    padding-left: 18px;
    background: #212121;
`

const PaneTab = styled.button`
    display: flex;
    justify-content: center;
    width: 60px;
    padding-top: 12px;
    border-bottom: 3px solid ${({ $active }) => ($active ? YELLOW : 'transparent')};
`

const Wells = styled.div`
    position: relative;
    display: flex;
    flex-direction: column;
    flex: 1;
    gap: 16px;
    padding: 11px 9px 6px 6px;
`

const Well = styled.div`
    h3 {
        padding-left: 11px;
        margin-bottom: 9px;
        font-size: 17px;
        line-height: 23px;
    }
`

const Drop = styled.div`
    height: ${({ $filled }) => ($filled ? 44 : 42)}px;
    padding: ${({ $filled }) => ($filled ? '3px' : '0 14px')};
    border: 2px dashed #666;
    border-radius: 5px;
    line-height: 39px;
    color: #bbb;
    background: #4a4a4a;
`

const Chip = styled.div`
    display: flex;
    align-items: center;
    gap: 12px;
    height: 34px;
    padding: 0 5px 0 4px;
    border: 2px solid #212121;
    border-radius: 4px;
    color: #fff;
    background: #333;

    span {
        flex: 1;
    }
`

const ScrollThumb = styled.i`
    position: absolute;
    top: 0;
    right: 0;
    width: 9px;
    height: 146px;
    border-radius: 4px;
    background: #777;
`

const SearchArea = styled.div`
    padding: 6px 6px 7px 5px;
    border-bottom: 2px solid #333;
`

const SearchBox = styled.div`
    display: flex;
    align-items: center;
    gap: 12px;
    height: 45px;
    padding: 0 16px;
    border: 2px solid #000;
    background: #212121;

    input {
        width: 100%;
        border: 0;
        outline: 0;
        padding: 0;
        font: inherit;
        font-size: 18px;
        color: #fff;
        background: none;
    }

    input::placeholder {
        color: #aaa;
    }
`

const TableRow = styled.div`
    display: flex;
    align-items: center;
    height: 58px;
    padding: 3px 0 0 10px;
    gap: 15px;

    span {
        margin-left: 2px;
        color: ${YELLOW};
    }
`

const FieldList = styled.div`
    padding: 0 9px 0 6px;
`

const Field = styled.label`
    display: flex;
    align-items: center;
    height: 33px;
    padding-left: 14px;
    border: 2px solid #333;
    border-radius: 5px;
    background: #666;
`

const Slot = styled.span`
    display: flex;
    align-items: center;
    justify-content: center;
    width: 18px;
`

const TypeSlot = styled(Slot)`
    width: 12px;
    margin-right: 10px;
`

const Tick = styled.span`
    display: flex;
    justify-content: center;
    width: 36px;

    input {
        appearance: none;
        width: 14px;
        height: 14px;
        margin: 0;
        background: #fff;
    }

    input:checked {
        width: 18px;
        height: 18px;
        background: ${YELLOW} url("data:image/svg+xml,%3Csvg xmlns='http://www.w3.org/2000/svg' viewBox='0 0 18 18' fill='none' stroke='%23333' stroke-width='1.500'%3E%3Cpath d='M4 9l3 3 6-6'/%3E%3C/svg%3E");
    }
`

const Status = styled.footer`
    height: 31px;
    padding: 0 7px;
    font-size: 16px;
    line-height: 34px;
    color: #fff;
    background: #333;
`

const Taskbar = styled.div`
    display: flex;
    justify-content: center;
    gap: 10px;
    height: 2px;
    padding-left: 182px;
    background: #111;

    i {
        width: 70px;
        background: #3c3a3c;
    }
`

export default App;
